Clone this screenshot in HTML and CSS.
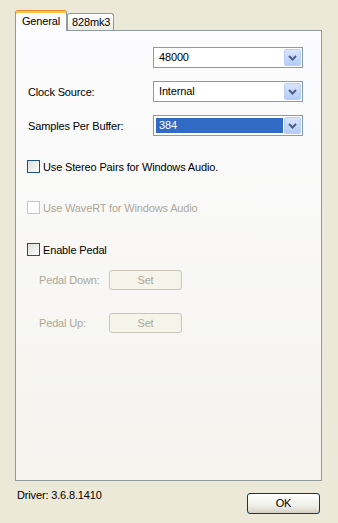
FILE: index.html
```html
<!DOCTYPE html>
<html>
<head>
<meta charset="utf-8">
<link rel="stylesheet" href="styles.css">
</head>
<body>
<div class="dialog">
  <div class="tabs">
    <div class="tab active">General</div>
    <div class="tab">828mk3</div>
  </div>
  <div class="panel">
    <div class="row first">
      <span class="label"></span>
      <div class="select"><span class="value">48000</span><span class="dd"><svg width="9" height="6" viewBox="0 0 9 6"><path d="M1 1 L4.5 4.5 L8 1" fill="none" stroke="#4D6185" stroke-width="2"/></svg></span></div>
    </div>
    <div class="row">
      <span class="label">Clock Source:</span>
      <div class="select"><span class="value">Internal</span><span class="dd"><svg width="9" height="6" viewBox="0 0 9 6"><path d="M1 1 L4.5 4.5 L8 1" fill="none" stroke="#4D6185" stroke-width="2"/></svg></span></div>
    </div>
    <div class="row">
      <span class="label">Samples Per Buffer:</span>
      <div class="select"><span class="value selected">384</span><span class="dd"><svg width="9" height="6" viewBox="0 0 9 6"><path d="M1 1 L4.5 4.5 L8 1" fill="none" stroke="#4D6185" stroke-width="2"/></svg></span></div>
    </div>
    <div class="check check1"><span class="box"></span><span>Use Stereo Pairs for Windows Audio.</span></div>
    <div class="check check2 disabled"><span class="box"></span><span>Use WaveRT for Windows Audio</span></div>
    <div class="check check3"><span class="box"></span><span>Enable Pedal</span></div>
    <div class="pedal pedal1"><span class="plabel">Pedal Down:</span><span class="btn-dis">Set</span></div>
    <div class="pedal pedal2"><span class="plabel">Pedal Up:</span><span class="btn-dis">Set</span></div>
  </div>
  <div class="footer">
    <span class="driver">Driver: 3.6.8.1410</span>
    <span class="ok">OK</span>
  </div>
</div>
</body>
</html>
```
FILE: styles.css
```css
html, body {
  margin: 0;
  padding: 0;
  background: #ECE9D8;
  width: 338px;
  height: 523px;
  overflow: hidden;
}
.dialog {
  font-family: Tahoma, "Liberation Sans", Arial, sans-serif;
  font-size: 11px;
  letter-spacing: -0.15px;
  color: #000;
  padding-top: 10px;
}
.tabs {
  display: flex;
  align-items: flex-end;
  height: 20px;
  margin-left: 15px;
}
.tab {
  box-sizing: border-box;
  height: 17px;
  padding: 0 4px;
  border: 1px solid #919B9C;
  border-bottom: 0;
  border-radius: 3px 3px 0 0;
  background: linear-gradient(#FFFFFF, #ECEBE6);
  line-height: 16px;
  width: 47px;
  text-align: center;
}
.tab.active {
  position: relative;
  z-index: 2;
  height: 21px;
  width: 52px;
  margin-bottom: -1px;
  border-top: 1px solid #E68B2C;
  box-shadow: inset 0 2px 0 #FFC73C;
  background: #FCFCFE;
  line-height: 19px;
  padding-top: 1px;
}
.panel {
  box-sizing: border-box;
  width: 307px;
  height: 451px;
  margin-left: 15px;
  border: 1px solid #919B9C;
  background: linear-gradient(#FCFCFE, #F4F3EE);
  padding: 16px 0 0 12px;
}
.row {
  display: flex;
  align-items: center;
  height: 21px;
  margin-top: 13px;
}
.row.first {
  margin-top: 0;
}
.label {
  width: 125px;
}
.select {
  box-sizing: border-box;
  width: 150px;
  height: 21px;
  border: 1px solid #7F9DB9;
  background: #fff;
  display: flex;
  align-items: center;
  padding: 1px;
}
.value {
  flex: 1;
  height: 15px;
  line-height: 15px;
  padding-left: 3px;
  margin-left: 1px;
}
.value.selected {
  background: #316AC5;
  color: #fff;
  margin-right: 1px;
}
.dd {
  box-sizing: border-box;
  width: 17px;
  height: 17px;
  border: 1px solid #B9CDF5;
  border-radius: 2px;
  background: linear-gradient(#D9E5FD, #B5CBF8);
  display: flex;
  align-items: center;
  justify-content: center;
}
.check {
  display: flex;
  align-items: center;
  height: 13px;
  margin-left: -1px;
}
.check1 { margin-top: 24px; }
.check2 { margin-top: 28px; }
.check3 { margin-top: 29px; }
.box {
  box-sizing: border-box;
  width: 13px;
  height: 13px;
  border: 1px solid #1C5180;
  background: linear-gradient(135deg, #DCDCD7, #FFFFFF);
  margin-right: 3px;
}
.disabled {
  color: #ACA899;
}
.disabled .box {
  border-color: #CAC8BB;
  background: #fff;
}
.pedal {
  display: flex;
  align-items: center;
  height: 20px;
  color: #ACA899;
  margin-left: 11px;
}
.pedal1 { margin-top: 14px; }
.pedal2 { margin-top: 23px; }
.plabel {
  width: 70px;
}
.btn-dis {
  box-sizing: border-box;
  width: 73px;
  height: 20px;
  border: 1px solid #C9C7BA;
  border-radius: 3px;
  background: #F5F4EA;
  text-align: center;
  line-height: 18px;
}
.footer {
  display: flex;
  align-items: flex-start;
  padding: 8px 18px 0 17px;
}
.driver {
  line-height: 13px;
}
.ok {
  margin-left: auto;
  margin-top: 4px;
  box-sizing: border-box;
  width: 73px;
  height: 21px;
  border: 1px solid #003C74;
  border-radius: 3px;
  background: linear-gradient(#FFFFFF, #F0F0EA 60%, #D6D0C5);
  text-align: center;
  line-height: 19px;
}
```
